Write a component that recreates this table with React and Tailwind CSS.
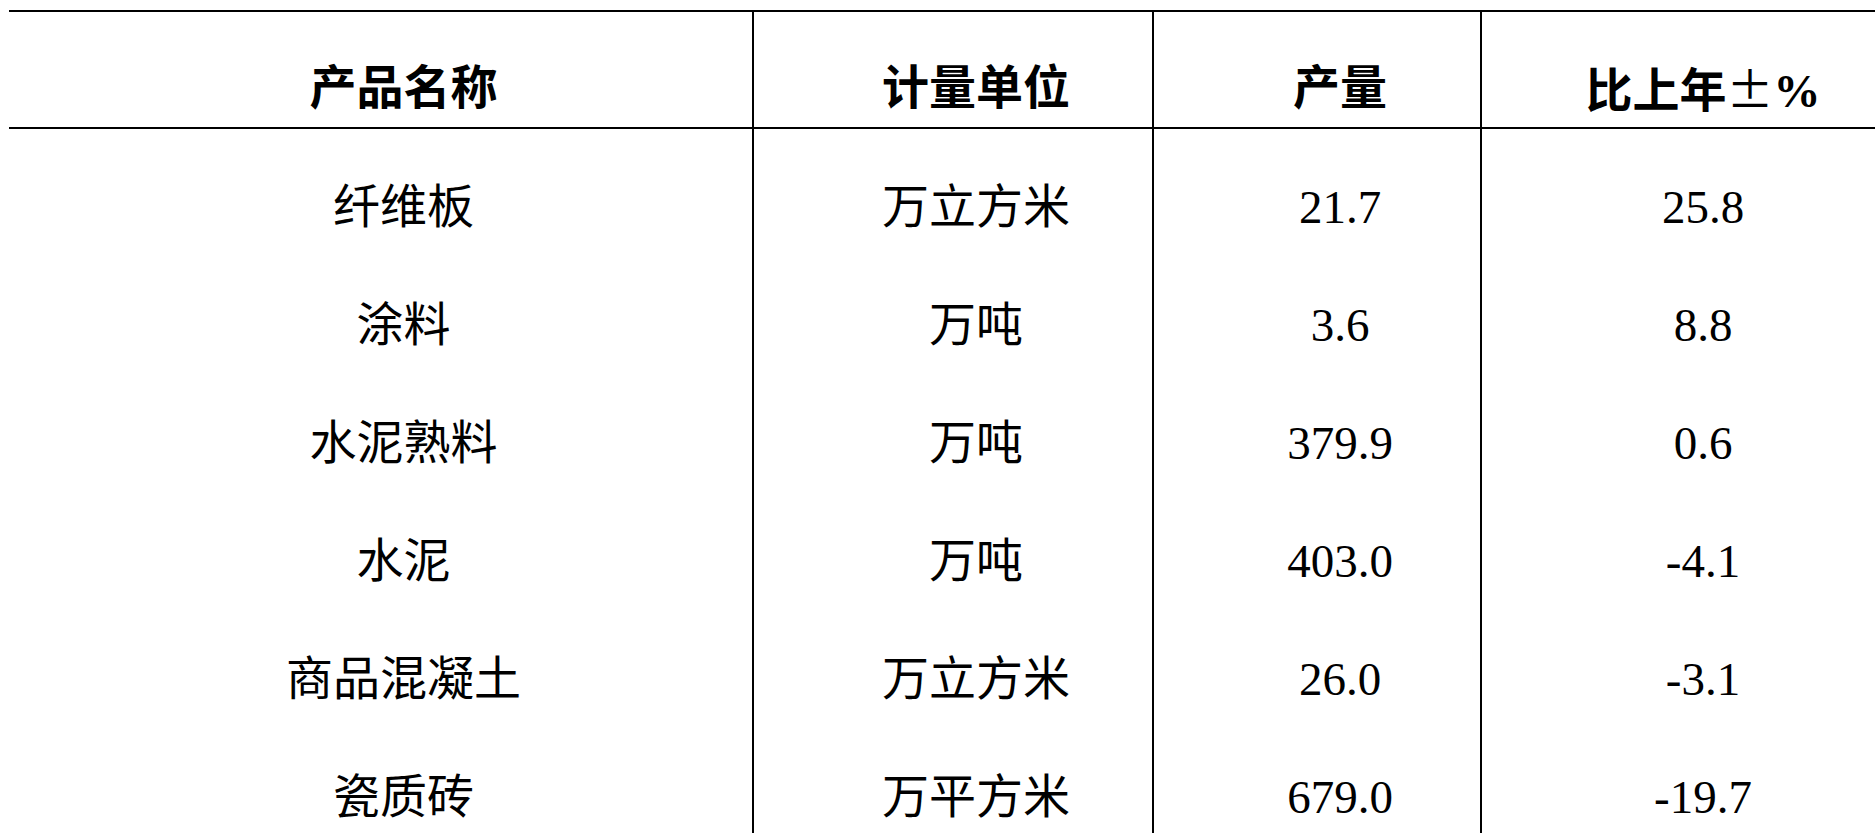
const rows = [
  ['纤维板', '万立方米', '21.7', '25.8'],
  ['涂料', '万吨', '3.6', '8.8'],
  ['水泥熟料', '万吨', '379.9', '0.6'],
  ['水泥', '万吨', '403.0', '-4.1'],
  ['商品混凝土', '万立方米', '26.0', '-3.1'],
  ['瓷质砖', '万平方米', '679.0', '-19.7'],
];

const headers = [
  '产品名称',
  '计量单位',
  '产量',
  <>
    比上年
    <span className="font-normal" style={{ fontFamily: '"Noto Sans CJK SC", sans-serif' }}>±</span>
    %
  </>,
];
const widths = ['w-[743px]', 'w-[400px] border-l-2', 'w-[328px] border-l-2', 'w-[398px] border-l-2'];

const font = { fontFamily: '"Liberation Serif", "Noto Sans CJK SC", serif' };

export default function App() {
  return (
    <div className="w-full h-[833px] overflow-hidden bg-white text-black" style={font}>
      <div className="ml-[9px] mt-[10px] w-[1869px] border-t-2 border-black">
        <div className="flex border-b-2 border-black">
          {headers.map((h, i) => (
            <div
              key={i}
              className={`${widths[i]} border-black h-[115px] pt-[38px] pl-[46px] flex items-center justify-center text-[47px] font-bold leading-none`}
            >
              <span className="leading-none">{h}</span>
            </div>
          ))}
        </div>
        {rows.map((r) => (
          <div key={r[0]} className="flex">
            {r.map((c, i) => (
              <div
                key={i}
                className={`${widths[i]} border-black h-[118px] pt-[38px] pl-[46px] flex items-center justify-center text-[47px] leading-none`}
              >
                {c}
              </div>
            ))}
          </div>
        ))}
      </div>
    </div>
  );
}
